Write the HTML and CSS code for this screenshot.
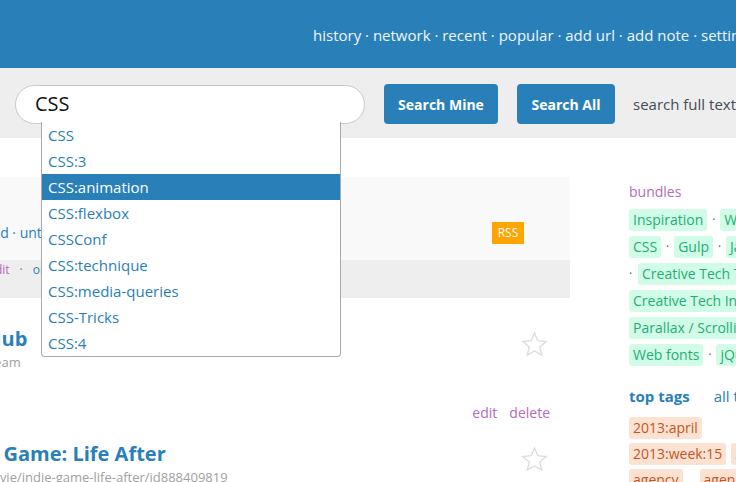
FILE: index.html
```html
<!DOCTYPE html>
<html>
<head>
<meta charset="utf-8">
<title>Pinboard</title>
<link rel="stylesheet" href="styles.css">
</head>
<body>
<header class="topbar">
  <nav class="topnav">history · network · recent · popular · add url · add note · settings · logout</nav>
</header>
<section class="searchbar">
  <div class="search-field">
    <input class="search-input" type="text" value="CSS">
    <ul class="suggest">
      <li>CSS</li>
      <li>CSS:3</li>
      <li class="active">CSS:animation</li>
      <li>CSS:flexbox</li>
      <li>CSSConf</li>
      <li>CSS:technique</li>
      <li>CSS:media-queries</li>
      <li>CSS-Tricks</li>
      <li>CSS:4</li>
    </ul>
  </div>
  <button class="btn btn-mine">Search Mine</button>
  <button class="btn btn-all">Search All</button>
  <span class="fulltext">search full text</span>
</section>
<div class="page">
  <main class="main">
    <div class="filters">
      <div class="filter-links">all · private · public · unread · untagged · starred</div>
      <span class="rss">RSS</span>
    </div>
    <div class="bulkbar">
      <span class="bulk-inner"><span class="purple">bulk edit</span><span class="dot">·</span><span class="blue">order by date</span></span>
    </div>
    <article class="bookmark first">
      <div class="bm-row">
        <div class="bm-text">
          <div class="bm-title t1">GitHub</div>
          <div class="bm-url u1">https://github.com/team</div>
        </div>
        <svg class="star" width="27" height="27" viewBox="0 0 24 24"><polygon points="12,1.8 14.9,8.6 22.3,9.3 16.7,14.2 18.4,21.5 12,17.7 5.6,21.5 7.3,14.2 1.7,9.3 9.1,8.6" fill="none" stroke="#dcdcdc" stroke-width="1.2" stroke-linejoin="miter"/></svg>
      </div>
      <div class="bm-actions"><span>edit</span><span>delete</span></div>
    </article>
    <article class="bookmark second">
      <div class="bm-row">
        <div class="bm-text">
          <div class="bm-title t2">Indie Game: Life After</div>
          <div class="bm-url u2">https://itunes.apple.com/us/movie/indie-game-life-after/id888409819</div>
        </div>
        <svg class="star" width="27" height="27" viewBox="0 0 24 24"><polygon points="12,1.8 14.9,8.6 22.3,9.3 16.7,14.2 18.4,21.5 12,17.7 5.6,21.5 7.3,14.2 1.7,9.3 9.1,8.6" fill="none" stroke="#dcdcdc" stroke-width="1.2" stroke-linejoin="miter"/></svg>
      </div>
    </article>
  </main>
  <aside class="sidebar">
    <div class="side-head">bundles</div>
    <div class="bundles">
      <div class="tag-row"><span class="tag">Inspiration</span><span class="sep">·</span><span class="tag">Web Design</span></div>
      <div class="tag-row"><span class="tag">CSS</span><span class="sep">·</span><span class="tag">Gulp</span><span class="sep">·</span><span class="tag">JavaScript</span></div>
      <div class="tag-row"><span class="sep lead">·</span><span class="tag">Creative Tech Tools</span></div>
      <div class="tag-row"><span class="tag">Creative Tech Inspiration</span></div>
      <div class="tag-row"><span class="tag">Parallax / Scrolling</span></div>
      <div class="tag-row"><span class="tag">Web fonts</span><span class="sep">·</span><span class="tag">jQuery</span></div>
    </div>
    <div class="toptags-head"><span class="tt-title">top tags</span><span class="tt-all">all tags</span></div>
    <div class="toptags">
      <div class="otag-row"><span class="otag">2013:april</span></div>
      <div class="otag-row"><span class="otag">2013:week:15</span><span class="otag near">2013</span></div>
      <div class="otag-row"><span class="otag">agency</span><span class="otag far">agencies</span></div>
    </div>
  </aside>
</div>
</body>
</html>
```
FILE: styles.css
```css
html, body {
  margin: 0;
  padding: 0;
}
body {
  width: 736px;
  height: 482px;
  overflow: hidden;
  background: #fff;
  font-family: "Open Sans", "Noto Sans", sans-serif;
}

/* header */
.topbar {
  height: 68px;
  background: #2980b9;
  display: flex;
  align-items: center;
  overflow: hidden;
}
.topnav {
  padding-left: 313px;
  padding-top: 2px;
  white-space: nowrap;
  color: #f1f5f9;
  font-size: 15px;
}

/* search */
.searchbar {
  height: 70px;
  background: #eeeeee;
  display: flex;
  align-items: center;
  padding-left: 15px;
  padding-top: 2px;
  box-sizing: border-box;
  white-space: nowrap;
}
.search-field {
  position: relative;
  width: 350px;
  height: 39px;
  flex-shrink: 0;
}
.search-input {
  box-sizing: border-box;
  width: 350px;
  height: 39px;
  margin: 0;
  border: 1px solid #c9c9c9;
  border-radius: 20px;
  padding: 0 0 2px 19px;
  font-family: "Open Sans", sans-serif;
  font-size: 20px;
  color: #111;
  background: #fff;
  outline: none;
}
.suggest {
  position: absolute;
  left: 26px;
  top: 37px;
  width: 300px;
  box-sizing: border-box;
  margin: 0;
  padding: 0;
  list-style: none;
  background: #fff;
  border: 1px solid #a9a9a9;
  border-top: none;
  border-radius: 0 0 4px 4px;
  z-index: 5;
}
.suggest li {
  height: 26px;
  line-height: 26px;
  padding-left: 6px;
  font-size: 15px;
  color: #2980b9;
}
.suggest li.active {
  background: #2980b9;
  color: #fff;
}
.btn {
  flex-shrink: 0;
  height: 40px;
  margin: 0 0 0 19px;
  padding: 0;
  border: none;
  border-radius: 4px;
  background: #2980b9;
  color: #fff;
  font-family: "Open Sans", sans-serif;
  font-weight: bold;
  font-size: 14px;
}
.btn-mine { width: 114px; }
.btn-all { width: 98px; }
.fulltext {
  margin-left: 18px;
  font-size: 15px;
  color: #454c55;
}

/* page */
.page {
  display: flex;
}
.main {
  width: 570px;
  flex-shrink: 0;
  padding-top: 39px;
  overflow: hidden;
}
.filters {
  height: 83px;
  box-sizing: border-box;
  background: #f9f9f9;
  display: flex;
  align-items: flex-end;
  justify-content: space-between;
  padding: 0 46px 16px 0;
}
.filter-links {
  margin-left: -171px;
  font-size: 14px;
  line-height: 22px;
  color: #2980b9;
  white-space: nowrap;
}
.rss {
  width: 32px;
  height: 22px;
  line-height: 22px;
  text-align: center;
  background: #ffa500;
  color: #fff;
  font-size: 12px;
}
.bulkbar {
  height: 38px;
  background: #eeeeee;
  font-size: 12px;
  line-height: 20px;
  white-space: nowrap;
}
.bulk-inner {
  display: inline-block;
  margin-left: -39px;
}
.purple { color: #b56bb8; }
.blue { color: #2980b9; }
.dot {
  color: #777;
  margin: 0 10px;
}

.bookmark.first { padding-top: 29px; }
.bookmark.second { padding-top: 19px; }
.bm-row {
  display: flex;
  justify-content: space-between;
  align-items: flex-start;
  padding-right: 22px;
}
.bm-text {
  white-space: nowrap;
  min-width: 0;
}
.bm-title {
  font-weight: bold;
  font-size: 20px;
  line-height: 24px;
  color: #2980b9;
}
.bm-url {
  margin-top: 2px;
  font-size: 13px;
  line-height: 18px;
  color: #a0a0a0;
}
.t1 { margin-left: -43px; }
.u1 { margin-left: -128px; }
.t2 { margin-left: -52px; }
.u2 { margin-left: -192px; }
.star {
  flex-shrink: 0;
  margin-top: 4px;
}
.bm-actions {
  margin-top: 32px;
  padding-right: 20px;
  text-align: right;
  font-size: 14px;
  line-height: 20px;
  color: #b56bb8;
}
.bm-actions span + span { margin-left: 12px; }

/* sidebar */
.sidebar {
  width: 320px;
  flex-shrink: 0;
  margin-left: 59px;
  padding-top: 44px;
  white-space: nowrap;
}
.side-head {
  font-size: 14px;
  line-height: 20px;
  color: #b56bb8;
}
.bundles { margin-top: 7px; }
.tag-row {
  display: flex;
  align-items: flex-start;
  height: 27px;
}
.tag {
  display: inline-block;
  height: 22px;
  line-height: 22px;
  padding: 0 4px;
  border-radius: 3px;
  background: #d1fce7;
  color: #1fae76;
  font-size: 14px;
}
.sep {
  width: 13px;
  text-align: center;
  font-size: 12px;
  line-height: 22px;
  color: #555;
}
.sep.lead { width: 9px; text-align: left; }
.toptags-head {
  margin-top: 15px;
  display: flex;
  font-size: 15px;
  line-height: 20px;
  color: #2980b9;
}
.tt-title { font-weight: bold; }
.tt-all { margin-left: 24px; }
.toptags { margin-top: 11px; }
.otag-row {
  display: flex;
  height: 26px;
}
.otag {
  display: inline-block;
  height: 22px;
  line-height: 22px;
  padding: 0 4px;
  border-radius: 3px;
  background: #fde2d2;
  color: #c4561f;
  font-size: 14px;
}
.otag.near { margin-left: 5px; }
.otag.far { margin-left: 17px; }
```
